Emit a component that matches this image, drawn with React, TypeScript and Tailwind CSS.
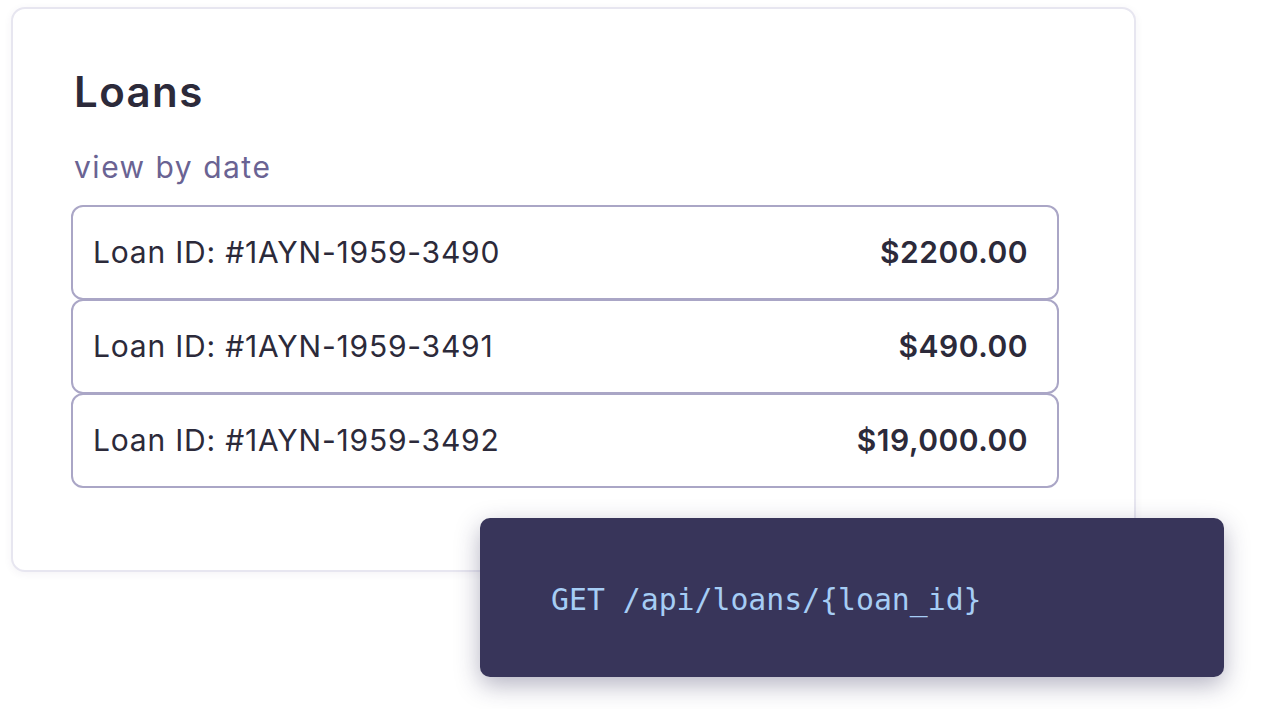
import React from "react";

type Loan = { id: string; amount: string };

const loans: Loan[] = [
  { id: "#1AYN-1959-3490", amount: "$2200.00" },
  { id: "#1AYN-1959-3491", amount: "$490.00" },
  { id: "#1AYN-1959-3492", amount: "$19,000.00" },
];

const LoanRow = ({ loan }: { loan: Loan }) => (
  <div className="flex h-[95px] items-center justify-between rounded-[12px] border-2 border-[#aaa6c6] bg-white pl-[20px] pr-[29px] -mt-[1px] first:mt-0">
    <span className="text-[30px] tracking-[0.8px] text-[#2c2a3a]">Loan ID: {loan.id}</span>
    <span className="text-[30px] font-semibold tracking-[0.5px] text-[#2c2a3a]">{loan.amount}</span>
  </div>
);

export default function App() {
  return (
    <div className="relative h-[709px] w-[1274px] overflow-hidden bg-white font-['Inter',sans-serif]">
      {/* loans card */}
      <div className="ml-[11px] mt-[7px] h-[565px] w-[1125px] rounded-[14px] border-2 border-[#e7e6f0] bg-white pl-[58px] pr-[75px] pt-[59px] shadow-[0_2px_8px_rgba(60,55,110,0.06)]">
        <h3 className="ml-[3px] text-[42px] font-semibold leading-[48px] tracking-[1.4px] text-[#2c2a3a]">Loans</h3>
        <div className="ml-[3px] mt-[34px] text-[30px] leading-[34px] tracking-[1.5px] text-[#6a6393]">view by date</div>
        <div className="mt-[21px] flex flex-col">
          {loans.map((l) => (
            <LoanRow key={l.id} loan={l} />
          ))}
        </div>
      </div>

      {/* endpoint box */}
      <div className="absolute left-[480px] top-[518px] flex h-[159px] w-[744px] items-center rounded-[10px] bg-[#38355a] pl-[71px] pt-[6px] shadow-[0_8px_24px_rgba(40,36,80,0.35)]">
        <span className="font-['DejaVu_Sans_Mono',monospace] text-[29.8px] text-[#a6cdf5]">GET /api/loans/{"{loan_id}"}</span>
      </div>
    </div>
  );
}
